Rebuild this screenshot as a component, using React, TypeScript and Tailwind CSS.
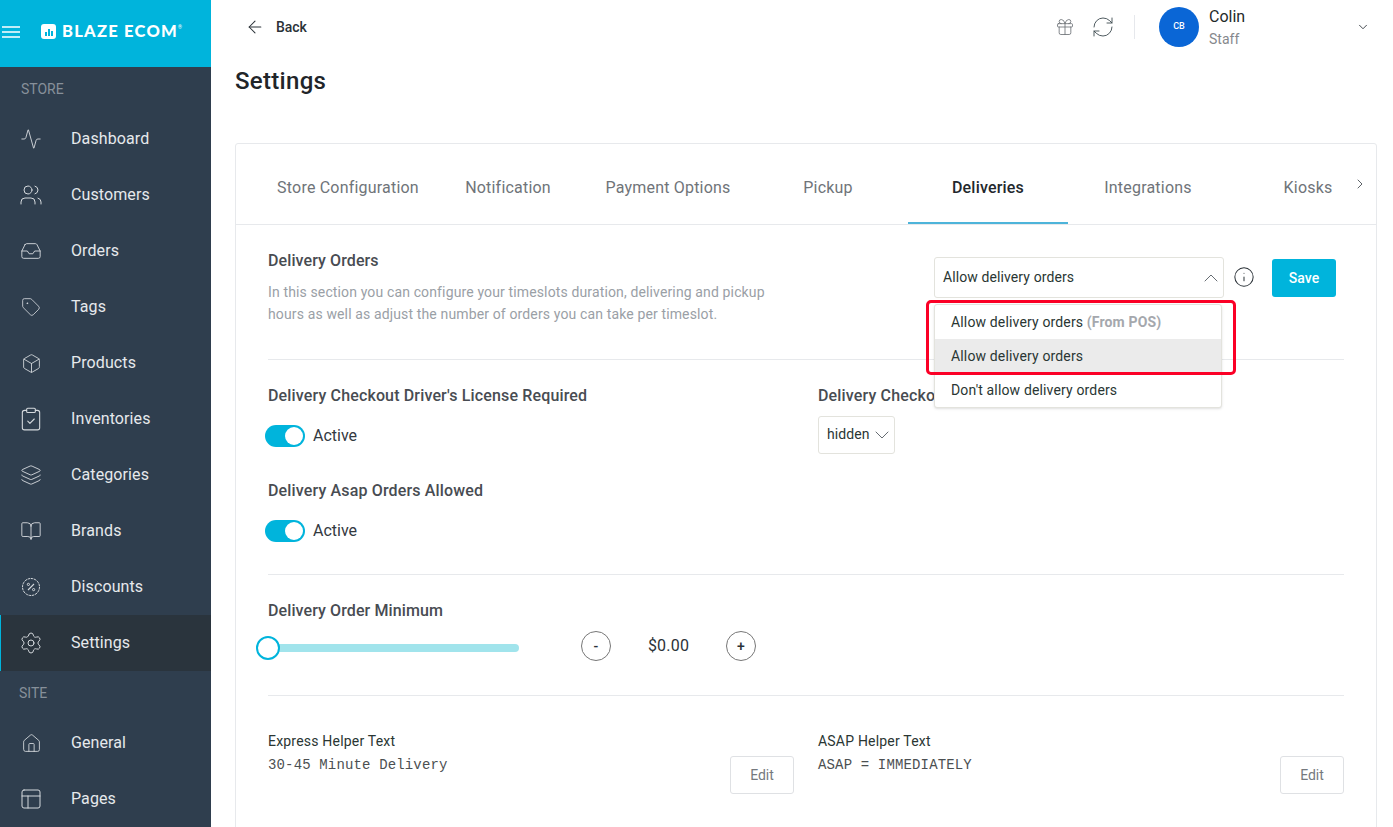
import React from 'react';
import {
  Activity, ArrowLeft, BookOpen, Box, ChevronDown, ChevronRight, ChevronUp,
  ClipboardCheck, Gift, Home, Inbox, Info, Layers, Layout, RefreshCw, Settings, Tag, Users,
} from 'lucide-react';

const DiscountIcon: React.FC<{ className?: string }> = ({ className }) => (
  <svg viewBox="0 0 24 24" fill="none" stroke="currentColor" strokeWidth="1" className={className}>
    <circle cx="12" cy="12" r="8.5" strokeDasharray="2.6 0.7" />
    <path d="M15 9l-6 6" strokeWidth="1.1" />
    <circle cx="9.4" cy="9.4" r="1.1" />
    <circle cx="14.6" cy="14.6" r="1.1" />
  </svg>
);

const storeItems = [
  { label: 'Dashboard', icon: Activity, size: 'w-[22px] h-[22px]' },
  { label: 'Customers', icon: Users, size: 'w-6 h-6' },
  { label: 'Orders', icon: Inbox, size: 'w-[22px] h-[22px]' },
  { label: 'Tags', icon: Tag, size: 'w-5 h-5' },
  { label: 'Products', icon: Box, size: 'w-[21px] h-[21px]' },
  { label: 'Inventories', icon: ClipboardCheck, size: 'w-[26px] h-[26px] shrink-0 -mx-px' },
  { label: 'Categories', icon: Layers, size: 'w-[22px] h-[22px]' },
  { label: 'Brands', icon: BookOpen, size: 'w-[22px] h-[22px]' },
  { label: 'Discounts', icon: DiscountIcon, size: 'w-6 h-6' },
  { label: 'Settings', icon: Settings, size: 'w-6 h-6', active: true },
];

const siteItems = [
  { label: 'General', icon: Home, size: 'w-[21px] h-[21px]' },
  { label: 'Pages', icon: Layout, size: 'w-6 h-6' },
];

const tabs = ['Store Configuration', 'Notification', 'Payment Options', 'Pickup', 'Deliveries', 'Integrations', 'Kiosks'];

const NavItem: React.FC<{ label: string; icon: React.ElementType; size: string; active?: boolean }> = ({ label, icon: Icon, size, active }) => (
  <div className={`h-14 flex items-center text-[16px] text-[#e6e9ec] tracking-[0.1px] ${active ? 'bg-[#2a343d] border-l border-[#00b4dc] pl-[18px]' : 'pl-[19px]'}`}>
    <div className="w-6 flex justify-center">
      <Icon className={`${size} text-[#d5d9dd]`} strokeWidth={1} absoluteStrokeWidth />
    </div>
    <span className="ml-7">{label}</span>
  </div>
);

const Toggle: React.FC = () => (
  <div className="flex items-center gap-2">
    <div className="w-10 h-[22px] rounded-full bg-[#00b4dc] flex items-center justify-end pr-[2px] -ml-[3px]">
      <div className="w-[18px] h-[18px] rounded-full bg-white"></div>
    </div>
    <span className="text-[16px] text-[#33393f]">Active</span>
  </div>
);

const App: React.FC = () => {
  return (
    <div className="flex w-[1393px] h-[827px] overflow-hidden bg-white font-['Roboto',sans-serif]">
      {/* Sidebar */}
      <aside className="w-[211px] shrink-0 bg-[#2f3e4e]">
        <div className="h-[67px] bg-[#00b4dc] flex items-center pb-[4px] text-white">
          <svg viewBox="0 0 18 12" className="w-[18px] h-3 ml-[2px]" fill="none" stroke="currentColor" strokeWidth="1.6">
            <path d="M0 1h18M0 6h18M0 11h18" />
          </svg>
          <div className="ml-[21px] w-[15px] h-[15px] rounded-[3px] bg-white flex items-end justify-center gap-px pb-[3px]">
            <div className="w-[2px] h-[4px] bg-[#00b4dc]"></div>
            <div className="w-[2px] h-[7px] bg-[#00b4dc]"></div>
            <div className="w-[2px] h-[5px] bg-[#00b4dc]"></div>
          </div>
          <span className="ml-[6px] font-['Lato',sans-serif] font-black text-[16.5px] tracking-[1.25px] whitespace-nowrap">BLAZE ECOM</span>
          <span className="text-[5px] self-start mt-[24px]">®</span>
        </div>
        <div className="h-11 flex items-center pl-[21px] text-[14px] text-[#87909a]">STORE</div>
        {storeItems.map((item) => <NavItem key={item.label} {...item} />)}
        <div className="h-11 flex items-center pl-[19px] text-[14px] text-[#87909a]">SITE</div>
        {siteItems.map((item) => <NavItem key={item.label} {...item} />)}
      </aside>

      {/* Main */}
      <main className="flex-1 min-w-0 pl-6 pr-4">
        <header className="h-[54px] flex items-center pl-[10px]">
          <ArrowLeft className="w-5 h-5 text-[#2b3238]" strokeWidth={1.25} />
          <span className="ml-[11px] text-[14px] font-medium text-[#2b3238] tracking-[-0.1px]">Back</span>
          <div className="ml-auto flex items-center">
            <Gift className="w-5 h-5 text-[#6b7075]" strokeWidth={1} />
            <RefreshCw className="w-6 h-6 ml-[16px] text-[#3c4a4f]" strokeWidth={0.9} />
            <div className="w-px h-6 bg-[#e6e8ec] ml-[19px]"></div>
            <div className="w-10 h-10 ml-6 rounded-full bg-[#0a66d6] text-white text-[9px] font-medium flex items-center justify-center">CB</div>
            <div className="ml-[10px] w-[147px] pt-[2px]">
              <div className="text-[16px] leading-5 text-[#1f2a2a]">Colin</div>
              <div className="text-[14px] leading-5 mt-[2px] text-[#85888c]">Staff</div>
            </div>
            <ChevronDown className="w-[14px] h-[14px] mr-[7px] text-[#2b3238]" strokeWidth={1.5} />
          </div>
        </header>

        <h1 className="mt-[11px] text-[24px] leading-8 font-medium text-[#212529] tracking-[0.3px]">Settings</h1>

        <section className="mt-[46px] h-[800px] border border-[#e7e9ec] rounded-[3px]">
          {/* Tabs */}
          <div className="h-[81px] flex pl-[32px] border-b border-[#e7e9ec] relative overflow-hidden">
            {tabs.map((tab) => (
              <div
                key={tab}
                className={`w-40 shrink-0 h-[81px] flex items-center justify-center text-[16px] tracking-[0.2px] whitespace-nowrap ${
                  tab === 'Deliveries' ? 'font-medium text-[#23282d] border-b-[3px] border-[#4db4da] pt-[9px]' : 'text-[#6f7479] pt-[6px]'
                }`}
              >
                {tab}
              </div>
            ))}
            <ChevronRight className="absolute right-[8px] top-[32px] w-4 h-4 text-[#5d6368]" strokeWidth={1.5} />
          </div>

          <div className="px-[32px]">
            {/* Delivery Orders */}
            <div className="h-[135px] flex border-b border-[#e7e9ec] relative">
              <div className="w-[530px] pt-[26px]">
                <div className="text-[16px] leading-5 font-medium text-[#484c52] tracking-[0.1px]">Delivery Orders</div>
                <p className="mt-[10px] text-[14px] leading-[22px] text-[#9aa0a6] tracking-[0.135px]">
                  In this section you can configure your timeslots duration, delivering and pickup hours as well as adjust the number of orders you can take per timeslot.
                </p>
              </div>
              <div className="ml-auto flex items-start pt-[32px]">
                <div className="w-[290px] h-[41px] border border-[#e3e3dd] rounded-[3px] flex items-center justify-between pl-2 text-[14px] text-[#2a3633] tracking-[0.1px]">
                  Allow delivery orders
                  <ChevronUp className="w-6 h-6 text-[#666c72]" strokeWidth={1} />
                </div>
                <Info className="w-[22px] h-[22px] mt-[9px] ml-[9px] text-[#2b3238]" strokeWidth={1.1} />
                <button className="ml-[17px] mt-[2px] mr-2 w-16 h-[38px] bg-[#00b4dc] rounded-[3px] text-white text-[14px] font-medium">Save</button>
              </div>

              {/* Open menu */}
              <div className="absolute z-10 left-[666px] top-[79px] w-[288px] h-[104px] bg-white border border-[#e3e3dd] rounded-[3px] shadow-sm text-[14px] text-[#2a3633] tracking-[0.15px]">
                <div className="h-[34px] flex items-center pl-4">
                  Allow delivery orders&nbsp;<span className="font-bold text-[#a5a8ad]">(From POS)</span>
                </div>
                <div className="h-[34px] flex items-center pl-4 bg-[#ebebeb]">Allow delivery orders</div>
                <div className="h-[34px] flex items-center pl-4">Don't allow delivery orders</div>
              </div>
              <div className="absolute z-20 left-[658px] top-[75px] w-[310px] h-[75px] border-[3px] border-[#fb0026] rounded-[5px]"></div>
            </div>

            {/* Toggles */}
            <div className="h-[215px] flex border-b border-[#e7e9ec]">
              <div className="w-[550px] pt-[26px]">
                <div className="text-[16px] leading-5 font-medium text-[#484c52] tracking-[0.15px]">Delivery Checkout Driver's License Required</div>
                <div className="mt-[18px]"><Toggle /></div>
                <div className="mt-[33px] text-[16px] leading-5 font-medium text-[#484c52] tracking-[0.15px]">Delivery Asap Orders Allowed</div>
                <div className="mt-[18px]"><Toggle /></div>
              </div>
              <div className="pt-[26px]">
                <div className="text-[16px] leading-5 font-medium text-[#484c52] tracking-[0.15px] whitespace-nowrap">Delivery Checkout</div>
                <div className="mt-[10px] w-[77px] h-[38px] border border-[#e3e3dd] rounded-[3px] flex items-center justify-between pl-2 text-[14px] text-[#2a3633] tracking-[0.1px]">
                  <span className="-mt-px">hidden</span>
                  <ChevronDown className="w-6 h-6 text-[#666c72]" strokeWidth={1} />
                </div>
              </div>
            </div>

            {/* Order minimum */}
            <div className="h-[121px] border-b border-[#e7e9ec] pt-[26px]">
              <div className="text-[16px] leading-5 font-medium text-[#484c52] tracking-[0.1px]">Delivery Order Minimum</div>
              <div className="flex items-center mt-[9px] h-[32px]">
                <div className="w-[251px] h-2 mt-[4px] rounded-full bg-[#a1e4ec] flex items-center">
                  <div className="w-6 h-6 -ml-[12px] rounded-full border-2 border-[#00b4dc] bg-white shrink-0"></div>
                </div>
                <div className="ml-[62px] w-[30px] h-[30px] rounded-full border border-[#777] flex items-center justify-center text-[14px] font-medium text-[#2b3238]">-</div>
                <div className="w-[115px] text-center text-[16px] text-[#2b3238] tracking-[0.2px]">$0.00</div>
                <div className="w-[30px] h-[30px] rounded-full border border-[#777] flex items-center justify-center text-[14px] font-medium text-[#2b3238]">+</div>
              </div>
            </div>

            {/* Helper text */}
            <div className="flex pt-[35px]">
              <div className="w-[526px] flex items-start">
                <div className="flex-1">
                  <div className="text-[14px] leading-5 text-[#2a3633] tracking-[0.2px]">Express Helper Text</div>
                  <div className="mt-[4px] font-['Liberation_Mono',monospace] text-[14px] tracking-[0.15px] leading-5 text-[#4c5052]">30-45 Minute Delivery</div>
                </div>
                <button className="mt-[25px] w-16 h-[38px] border border-[#dfe1e4] rounded-[3px] text-[14px] text-[#75797e]">Edit</button>
              </div>
              <div className="ml-[24px] w-[526px] flex items-start">
                <div className="flex-1">
                  <div className="text-[14px] leading-5 text-[#2a3633] tracking-[0.2px]">ASAP Helper Text</div>
                  <div className="mt-[4px] font-['Liberation_Mono',monospace] text-[14px] tracking-[0.15px] leading-5 text-[#4c5052]">ASAP = IMMEDIATELY</div>
                </div>
                <button className="mt-[25px] w-16 h-[38px] border border-[#dfe1e4] rounded-[3px] text-[14px] text-[#75797e]">Edit</button>
              </div>
            </div>
          </div>
        </section>
      </main>
    </div>
  );
};

export default App;
